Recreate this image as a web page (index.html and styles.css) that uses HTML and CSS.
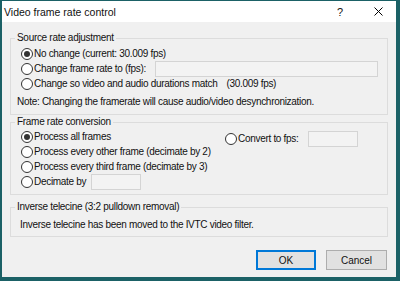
FILE: index.html
```html
<!DOCTYPE html>
<html>
<head>
<meta charset="utf-8">
<link rel="stylesheet" href="styles.css">
</head>
<body>
<div class="window">
  <div class="titlebar">
    <span class="title">Video frame rate control</span>
    <span class="help">?</span>
    <span class="close"><svg width="9" height="9" viewBox="0 0 9 9"><path d="M0.5 0.5 L8.5 8.5 M8.5 0.5 L0.5 8.5" stroke="#000" stroke-width="1" fill="none"/></svg></span>
  </div>
  <div class="content">
    <fieldset class="group g1">
      <legend>Source rate adjustment</legend>
      <div class="row"><span class="radio checked"></span><span>No change (current: 30.009 fps)</span></div>
      <div class="row"><span class="lbl lbl-fps"><span class="radio"></span><span>Change frame rate to (fps):</span></span><span class="input wide"></span></div>
      <div class="row"><span class="radio"></span><span>Change so video and audio durations match</span><span class="extra">(30.009 fps)</span></div>
      <div class="note">Note: Changing the framerate will cause audio/video desynchronization.</div>
    </fieldset>
    <fieldset class="group g2">
      <legend>Frame rate conversion</legend>
      <div class="cols">
        <div class="col-left">
          <div class="row"><span class="radio checked"></span><span>Process all frames</span></div>
          <div class="row"><span class="radio"></span><span>Process every other frame (decimate by 2)</span></div>
          <div class="row"><span class="radio"></span><span>Process every third frame (decimate by 3)</span></div>
          <div class="row"><span class="lbl lbl-dec"><span class="radio"></span><span>Decimate by</span></span><span class="input small"></span></div>
        </div>
        <div class="col-right">
          <div class="row"><span class="lbl lbl-conv"><span class="radio"></span><span>Convert to fps:</span></span><span class="input small"></span></div>
        </div>
      </div>
    </fieldset>
    <fieldset class="group g3">
      <legend>Inverse telecine (3:2 pulldown removal)</legend>
      <div class="info">Inverse telecine has been moved to the IVTC video filter.</div>
    </fieldset>
    <div class="buttons">
      <span class="btn default">OK</span>
      <span class="btn">Cancel</span>
    </div>
  </div>
</div>
</body>
</html>
```
FILE: styles.css
```css
html, body {
  margin: 0;
  padding: 0;
}
body {
  background: #1b6166;
  width: 400px;
  height: 281px;
  overflow: hidden;
  font-family: "Liberation Sans", Arial, sans-serif;
  font-size: 10px;
  letter-spacing: -0.3px;
  color: #111;
}
.window {
  margin: 1px 4px 0 2px;
  width: 394px;
  height: 276px;
  background: #f0f0f0;
  display: flex;
  flex-direction: column;
}
.titlebar {
  height: 21px;
  background: #fff;
  display: flex;
  align-items: center;
}
.title {
  font-size: 10.5px;
  letter-spacing: 0;
  padding-left: 2px;
  flex: 1;
}
.help {
  width: 40px;
  text-align: center;
  font-size: 11px;
  letter-spacing: 0;
}
.close {
  width: 36px;
  display: flex;
  justify-content: center;
  align-items: center;
}
.close svg { display: block; }
.content {
  display: flex;
  flex-direction: column;
  padding-top: 10px;
}
.group {
  margin: 0 8px;
  border: 1px solid #dcdcdc;
  padding: 0 6px 5px 6px;
  min-width: 0;
}
.group legend {
  padding: 0 2px;
  margin-left: -2px;
  line-height: 12px;
}
.g1 { padding-top: 2px; }
.g2 { margin-top: 1px; padding-top: 1px; }
.g3 { margin-top: 6px; padding-top: 4px; padding-bottom: 4px; }
.row {
  height: 15px;
  display: flex;
  align-items: center;
  margin-left: 4px;
  white-space: nowrap;
}
.lbl {
  display: flex;
  align-items: center;
}
.lbl-fps { width: 134px; }
.lbl-dec { width: 70px; }
.lbl-conv { width: 83px; }
.radio {
  width: 10px;
  height: 10px;
  border: 1px solid #333;
  border-radius: 50%;
  background: #fff;
  margin-right: 1px;
  display: flex;
  align-items: center;
  justify-content: center;
  flex: none;
}
.radio.checked::after {
  content: "";
  width: 6px;
  height: 6px;
  border-radius: 50%;
  background: #333;
}
.input {
  border: 1px solid #d4d4d4;
  background: #f3f3f3;
  box-sizing: border-box;
  height: 16px;
}
.input.wide { width: 223px; }
.input.small { width: 50px; }
.extra { margin-left: 9px; }
.note {
  margin-top: 3px;
  line-height: 15px;
  white-space: nowrap;
}
.cols {
  display: flex;
}
.col-left { width: 208px; }
.col-right { padding-top: 2px; }
.col-right .row { margin-left: 0; }
.info {
  margin-left: 3px;
  line-height: 15px;
}
.buttons {
  display: flex;
  justify-content: flex-end;
  gap: 10px;
  margin-top: 13px;
  padding-right: 9px;
}
.btn {
  width: 61px;
  height: 20px;
  box-sizing: border-box;
  border: 1px solid #adadad;
  background: #e1e1e1;
  display: flex;
  align-items: center;
  justify-content: center;
  letter-spacing: 0;
}
.btn.default {
  border: 2px solid #0078d7;
  width: 60px;
}
```
